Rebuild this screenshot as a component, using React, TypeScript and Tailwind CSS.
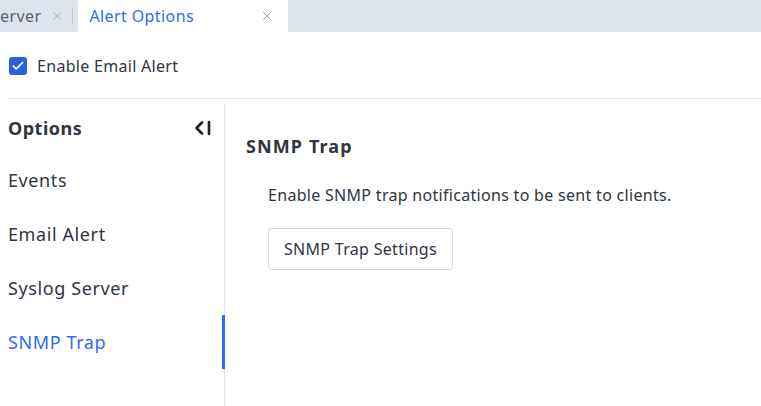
import { Check, X } from 'lucide-react';

const navItems = ['Events', 'Email Alert', 'Syslog Server', 'SNMP Trap'];

function Tabs() {
    return <div className="flex h-8 bg-[#dee4ee] overflow-hidden">
        <div className="flex items-center shrink-0">
            <span className="text-[16px] tracking-[0.4px] text-[#5c6270]">erver</span>
            <X className="ml-[9px] text-[#a2a8b3]" size={14} strokeWidth={1.5} />
            <div className="ml-[8px] w-px h-[18px] bg-[#c2c8d2]"></div>
        </div>
        <div className="ml-[5px] flex items-center w-[210px] bg-white px-[11px] justify-between">
            <span className="text-[16px] tracking-[0.4px] text-[#2f6bf5]">Alert Options</span>
            <X className="text-[#8d929c] mr-[3px]" size={14} strokeWidth={1.5} />
        </div>
    </div>;
}

export default function App() {
    return <div className="w-[761px] h-[406px] bg-white overflow-hidden text-[#303540]" style={{ fontFamily: '"Noto Sans", "Open Sans", sans-serif' }}>
        <Tabs />
        <div className="flex items-center h-[67px] pt-[1px] border-b border-[#dfe2ea] ml-[8px]">
            <div className="ml-[1px] w-[18px] h-[18px] rounded-[3px] bg-[#2f5ee0] flex items-center justify-center">
                <Check className="text-white" size={14} strokeWidth={3} />
            </div>
            <span className="ml-[10px] text-[16px] tracking-[0.3px]">Enable Email Alert</span>
        </div>
        <div className="flex mt-[4px]">
            <div className="w-[225px] shrink-0 border-r border-[#dfe2ea] h-[303px]">
                <div className="flex items-center justify-between h-[50px] pl-[8px] pr-[12px]">
                    <span className="text-[18px] font-bold tracking-[0.5px]">Options</span>
                    <svg width="18" height="18" viewBox="0 0 18 18" fill="none" stroke="#1f2329" strokeWidth="2.6" strokeLinecap="round" strokeLinejoin="round">
                        <path d="M8 3.5 L2.5 9 L8 14.5" />
                        <path d="M15 3 V15" />
                    </svg>
                </div>
                {navItems.map(item => {
                    const active = item === 'SNMP Trap';
                    return <div key={item} className={active
                        ? 'h-[54px] flex items-center pl-[8px] text-[18px] tracking-[0.6px] text-[#2f6bf5] border-r-[3px] border-[#2f6bf5] -mr-px'
                        : 'h-[54px] flex items-center pl-[8px] text-[18px] tracking-[0.6px]'}>
                        {item}
                    </div>;
                })}
            </div>
            <div className="pl-[21px] pt-[30px]">
                <div className="text-[18px] font-bold tracking-[1.1px]">SNMP Trap</div>
                <div className="pl-[22px]">
                    <div className="mt-[23px] text-[16px] tracking-[0.3px]">Enable SNMP trap notifications to be sent to clients.</div>
                    <button className="mt-[21px] h-[42px] px-[15px] border border-[#d6d9e0] rounded-[3px] text-[16px] tracking-[0.3px] bg-white">SNMP Trap Settings</button>
                </div>
            </div>
        </div>
    </div>;
}
